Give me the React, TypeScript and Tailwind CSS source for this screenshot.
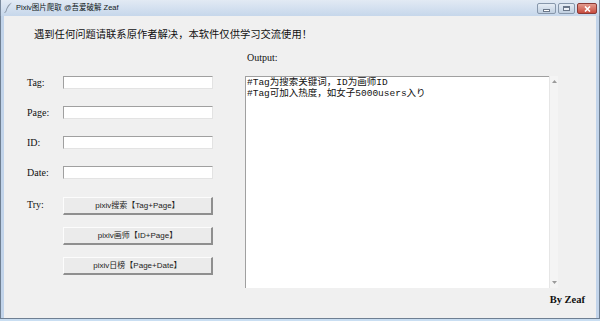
import React from 'react'

const fields = ['Tag', 'Page', 'ID', 'Date']

const buttons = ['pixiv搜索【Tag+Page】', 'pixiv画师【ID+Page】', 'pixiv日榜【Page+Date】']

export default function App() {
  return (
    <div className="w-[600px] h-[321px] flex flex-col bg-[#c2d4ea] overflow-hidden">
      {/* Title bar */}
      <div className="h-[16px] flex items-start bg-gradient-to-b from-[#e2eaf4] to-[#c6d7eb] border-l border-r border-[#7a8a9e]">
        <div className="flex items-center h-[15px] pl-[3px] gap-[3px]">
          <svg width="9" height="11" viewBox="0 0 9 11">
            <path d="M8 0.5 C5 1.5 2.5 4.5 1.5 9.5 L2.3 9.7 C3.5 5.5 5.5 3 8 0.5 Z" fill="#8a96a6" />
            <path d="M1.5 9.5 L0.8 10.8" stroke="#6b7686" strokeWidth="0.8" />
          </svg>
          <span className="text-[7.5px] leading-none text-[#101820] font-['Liberation_Sans','Noto_Sans_CJK_SC',sans-serif]">
            Pixiv图片爬取 @吾爱破解 Zeaf
          </span>
        </div>
        <div className="ml-auto flex gap-[2px] pt-[3px] pr-[2px]">
          <div className="w-[19px] h-[11px] rounded-[2px] border border-[#8797ab] bg-gradient-to-b from-[#e6edf5] to-[#c0cfe0] flex items-center justify-center">
            <div className="w-[7px] h-[3px] mt-[3px] bg-white border border-[#6a7789]" />
          </div>
          <div className="w-[17px] h-[11px] rounded-[2px] border border-[#8797ab] bg-gradient-to-b from-[#e6edf5] to-[#c0cfe0] flex items-center justify-center">
            <div className="w-[7px] h-[5px] border border-[#6a7789] border-t-2 bg-[#eef2f8]" />
          </div>
          <div className="w-[20px] h-[11px] rounded-[2px] border border-[#8b3a36] bg-gradient-to-b from-[#e39a8e] to-[#c74a3e] flex items-center justify-center">
            <svg width="7" height="6" viewBox="0 0 7 6">
              <path d="M1 0.5 L6 5.5 M6 0.5 L1 5.5" stroke="#ffffff" strokeWidth="1.6" />
            </svg>
          </div>
        </div>
      </div>

      <div className="flex-1 flex">
        <div className="w-[4px] border-l border-[#6f7f92] bg-[#c2d4ea]" />
        <div className="flex-1 bg-[#f0f0f0] flex flex-col">
          {/* Header note */}
          <div className="ml-[30px] mt-[11px] text-[10.3px] leading-[14px] text-[#111] font-['Noto_Sans_CJK_SC',sans-serif]">
            遇到任何问题请联系原作者解决，本软件仅供学习交流使用！
          </div>

          <div className="flex mt-[10px]">
            {/* Left column */}
            <div className="w-[218px] ml-[23px] pt-[25px] flex flex-col">
              <div className="flex flex-col gap-[17px]">
                {fields.map((f) => (
                  <div key={f} className="flex items-center h-[13px]">
                    <span className="w-[36px] text-[10px] text-[#111] font-['Liberation_Serif','Noto_Sans_CJK_SC',serif]">
                      {f}:
                    </span>
                    <div className="w-[150px] h-[13px] bg-white border-t border-l border-[#a0a0a0] border-r border-b border-r-[#e3e3e3] border-b-[#e3e3e3]" />
                  </div>
                ))}
              </div>
              <div className="flex mt-[18px]">
                <span className="w-[36px] pt-[1px] text-[10px] leading-[14px] text-[#111] font-['Liberation_Serif','Noto_Sans_CJK_SC',serif]">
                  Try:
                </span>
                <div className="flex flex-col gap-[12px]">
                  {buttons.map((b) => (
                    <div
                      key={b}
                      className="w-[150px] h-[18px] flex items-center justify-center bg-[#ebebeb] border-t border-l border-[#fcfcfc] border-r-2 border-b-2 border-r-[#8f8f8f] border-b-[#8f8f8f] text-[8px] text-[#222] font-['Liberation_Sans','Noto_Sans_CJK_SC',sans-serif]"
                    >
                      {b}
                    </div>
                  ))}
                </div>
              </div>
            </div>

            {/* Right column */}
            <div className="w-[340px] flex flex-col">
              <div className="pl-[2px] text-[10px] leading-[14px] text-[#111] font-['Liberation_Serif','Noto_Sans_CJK_SC',serif]">
                Output:
              </div>
              <div className="mt-[11px] w-[313px] h-[212px] flex">
                <div className="flex-1 bg-white border-t border-l border-[#a0a0a0] pl-[1px] pt-[1px] text-[9.5px] leading-[10.5px] text-[#111] font-['Liberation_Mono','Noto_Sans_CJK_SC',monospace]">
                  <div>#Tag为搜索关键词，ID为画师ID</div>
                  <div>#Tag可加入热度，如女子5000users入り</div>
                </div>
                <div className="w-[9px] bg-[#f4f4f4] border-l border-[#e6e6e6] flex flex-col items-center justify-between py-[4px]">
                  <svg width="5" height="3" viewBox="0 0 5 3">
                    <path d="M0 3 L2.5 0 L5 3 Z" fill="#9a9a9a" />
                  </svg>
                  <svg width="5" height="3" viewBox="0 0 5 3">
                    <path d="M0 0 L2.5 3 L5 0 Z" fill="#9a9a9a" />
                  </svg>
                </div>
              </div>
              <div className="mt-[5px] text-right text-[10.5px] leading-[14px] font-bold text-[#111] font-['Liberation_Serif',serif]">
                By Zeaf
              </div>
            </div>
          </div>
        </div>
        <div className="w-[4px] border-r border-[#6f7f92] bg-[#c2d4ea]" />
      </div>
      <div className="h-[3px] border-t border-[#6f7f92] bg-[#c9def2]" />
    </div>
  )
}
